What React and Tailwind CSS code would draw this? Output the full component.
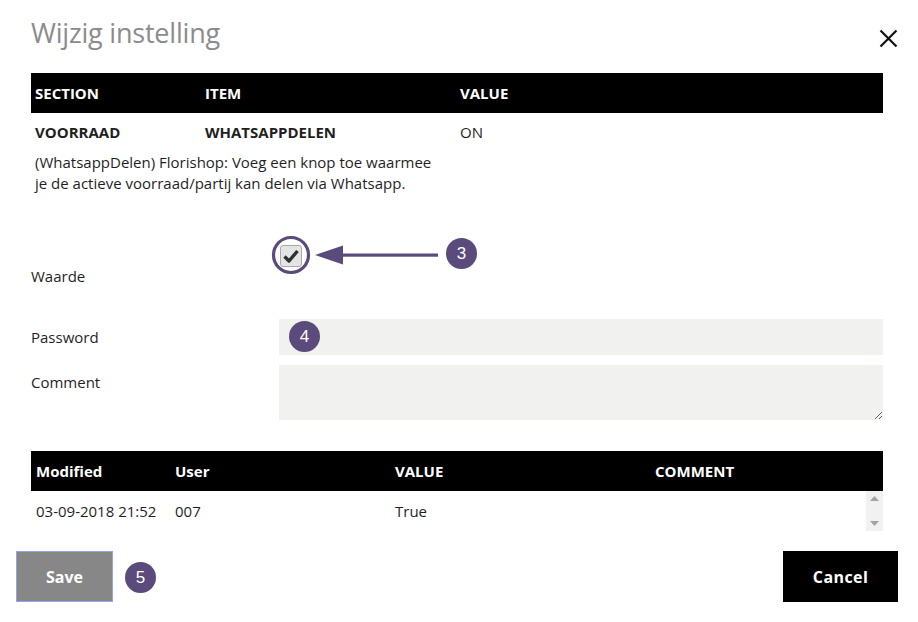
import React from "react";

const font = { fontFamily: '"Open Sans", "Noto Sans", sans-serif' };

function Badge({ n, className }) {
  return (
    <div
      className={`absolute w-[31px] h-[31px] rounded-full bg-[#5b4a7c] text-white text-[17px] flex items-center justify-center leading-none ${className}`}
      style={{ fontFamily: '"Liberation Sans", Arial, sans-serif' }}
    >
      {n}
    </div>
  );
}

export default function App() {
  return (
    <div className="relative w-[918px] h-[622px] bg-white text-[#1f1f1f] text-[15px]" style={font}>
      {/* Header */}
      <div className="flex items-start justify-between h-[73px] pl-[31px] pr-[20px]">
        <h1 className="text-[27px] text-[#8c8c8c] font-normal pt-[15px] leading-[36px] tracking-[-0.2px]">Wijzig instelling</h1>
        <svg className="mt-[29px]" width="19" height="19" viewBox="0 0 19 19">
          <path d="M1.5 1.5 L17.5 17.5 M17.5 1.5 L1.5 17.5" stroke="#111" strokeWidth="2.2" />
        </svg>
      </div>

      <div className="pl-[31px] w-[883px]">
        {/* Table 1 */}
        <div className="grid grid-cols-[170px_255px_1fr] h-[40px] bg-black text-white font-bold items-center">
          <div className="pl-[4px]">SECTION</div>
          <div className="pl-[4px]">ITEM</div>
          <div className="pl-[4px]">VALUE</div>
        </div>
        <div className="grid grid-cols-[170px_255px_1fr] h-[39px] items-center">
          <div className="pl-[4px] font-bold">VOORRAAD</div>
          <div className="pl-[4px] font-bold">WHATSAPPDELEN</div>
          <div className="pl-[4px]">ON</div>
        </div>
        <div className="pl-[4px] leading-[21px] whitespace-nowrap">
          (WhatsappDelen) Florishop: Voeg een knop toe waarmee
          <br />
          je de actieve voorraad/partij kan delen via Whatsapp.
        </div>

        {/* Form */}
        <div className="grid grid-cols-[248px_1fr] mt-[50px] h-[57px]">
          <div className="pt-[21px] leading-[22px]">Waarde</div>
          <div className="pt-[1px]">
            <div className="relative ml-[1px] w-[22px] h-[22px] rounded-[3px] border border-[#a9a9a9] bg-[#e4e4e4] flex items-center justify-center">
              <svg width="16" height="14" viewBox="0 0 16 14">
                <path d="M1.5 7.5 L6 12 L14.5 2" fill="none" stroke="#2f2f2f" strokeWidth="3.4" strokeLinejoin="round" />
              </svg>
            </div>
          </div>
        </div>
        <div className="grid grid-cols-[248px_1fr] mt-[18px] h-[36px]">
          <div className="flex items-center">Password</div>
          <input className="h-[36px] bg-[#f1f2f0] outline-none border-0" type="password" />
        </div>
        <div className="grid grid-cols-[248px_1fr] mt-[10px] h-[55px]">
          <div className="pt-[6px] leading-[22px]">Comment</div>
          <textarea className="h-[55px] bg-[#f1f2f0] outline-none border-0 resize-y" />
        </div>

        {/* Table 2 */}
        <div className="mt-[31px] grid grid-cols-[140px_220px_260px_1fr] h-[40px] bg-black text-white font-bold items-center">
          <div className="pl-[5px]">Modified</div>
          <div className="pl-[4px]">User</div>
          <div className="pl-[4px]">VALUE</div>
          <div className="pl-[4px]">COMMENT</div>
        </div>
        <div className="flex h-[40px]">
          <div className="flex-1 grid grid-cols-[140px_220px_260px_1fr] items-center">
            <div className="pl-[5px]">03-09-2018 21:52</div>
            <div className="pl-[4px]">007</div>
            <div className="pl-[4px]">True</div>
            <div></div>
          </div>
          <div className="w-[17px] bg-[#f1f1f1] flex flex-col justify-between items-center py-[5px]">
            <svg width="9" height="5" viewBox="0 0 9 5"><path d="M0 5 L4.5 0 L9 5 Z" fill="#a3a3a3" /></svg>
            <svg width="9" height="5" viewBox="0 0 9 5"><path d="M0 0 L4.5 5 L9 0 Z" fill="#a3a3a3" /></svg>
          </div>
        </div>
      </div>

      {/* Buttons */}
      <div className="flex justify-between items-start mt-[20px] pl-[16px] pr-[20px]">
        <button className="w-[97px] h-[51px] bg-[#878787] border border-[#8fa4ea] text-white font-bold text-[16px]">Save</button>
        <button className="w-[115px] h-[51px] bg-black text-white font-bold text-[16px] tracking-[0.4px]">Cancel</button>
      </div>

      {/* Annotations */}
      <svg className="absolute left-[268px] top-[232px]" width="180" height="46" viewBox="0 0 180 46">
        <circle cx="23" cy="23" r="17.5" fill="none" stroke="#5b4a7c" strokeWidth="3.2" />
        <path d="M47 23 L75 13.5 L75 32.5 Z" fill="#5b4a7c" />
        <rect x="72" y="21.5" width="98" height="3.2" fill="#5b4a7c" />
      </svg>
      <Badge n="3" className="left-[446px] top-[238px]" />
      <Badge n="4" className="left-[289px] top-[321px]" />
      <Badge n="5" className="left-[125px] top-[562px]" />
    </div>
  );
}
